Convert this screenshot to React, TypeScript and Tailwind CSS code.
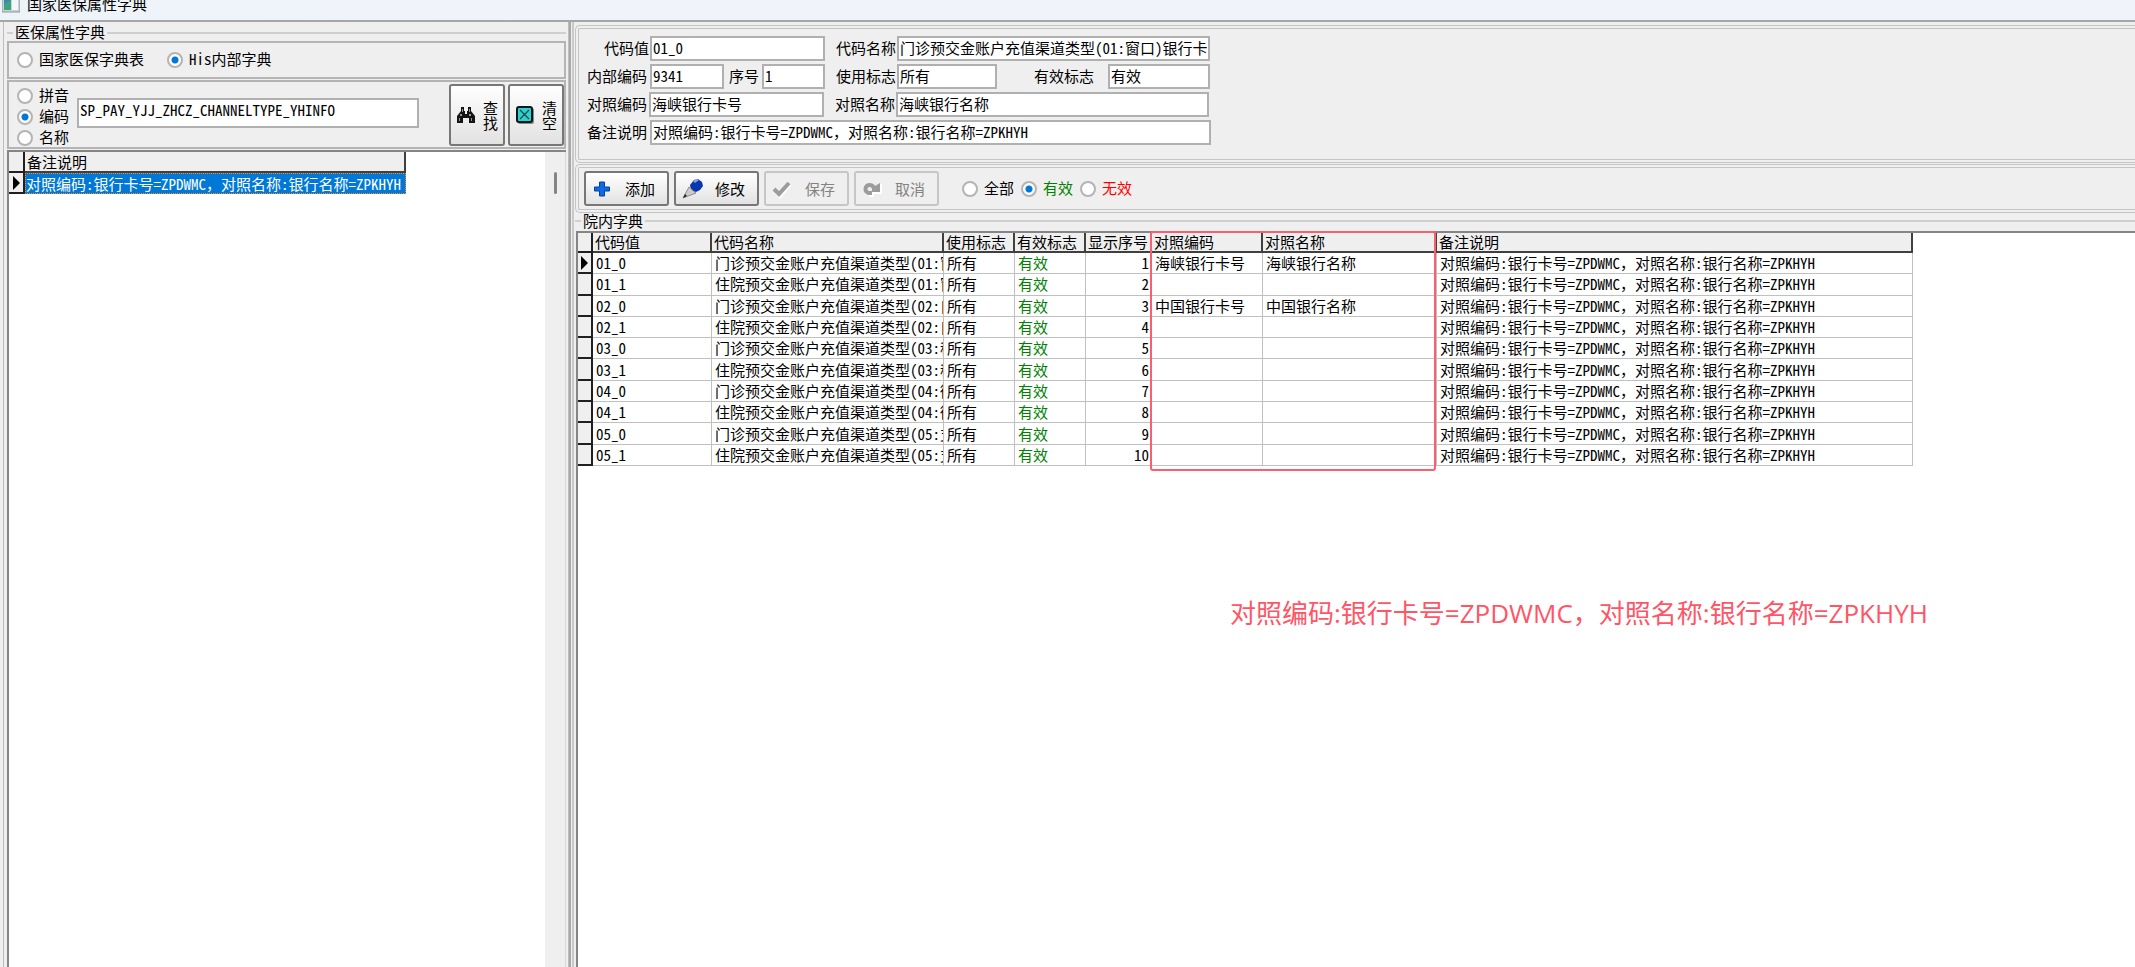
import { useState } from "react";
import type { InputHTMLAttributes, ReactNode } from "react";
import clsx from "clsx";

interface DictRow {
  code: string;
  name: string;
  order: number;
  mapCode?: string;
  mapName?: string;
}

const REMARK = "对照编码:银行卡号=ZPDWMC，对照名称:银行名称=ZPKHYH";

const ROWS: DictRow[] = [
  { code: "01_0", name: "门诊预交金账户充值渠道类型(01:窗口)", order: 1, mapCode: "海峡银行卡号", mapName: "海峡银行名称" },
  { code: "01_1", name: "住院预交金账户充值渠道类型(01:窗口)", order: 2 },
  { code: "02_0", name: "门诊预交金账户充值渠道类型(02:自助)", order: 3, mapCode: "中国银行卡号", mapName: "中国银行名称" },
  { code: "02_1", name: "住院预交金账户充值渠道类型(02:自助)", order: 4 },
  { code: "03_0", name: "门诊预交金账户充值渠道类型(03:移动)", order: 5 },
  { code: "03_1", name: "住院预交金账户充值渠道类型(03:移动)", order: 6 },
  { code: "04_0", name: "门诊预交金账户充值渠道类型(04:微信)", order: 7 },
  { code: "04_1", name: "住院预交金账户充值渠道类型(04:微信)", order: 8 },
  { code: "05_0", name: "门诊预交金账户充值渠道类型(05:支付宝)", order: 9 },
  { code: "05_1", name: "住院预交金账户充值渠道类型(05:支付宝)", order: 10 },
];

const TH =
  "whitespace-nowrap border-b-2 border-r-2 border-[#404040] bg-[#efefef] p-0 pl-[2px] text-left font-normal leading-[18px]";
const TD = "whitespace-nowrap border-b border-r border-[#c0c0c0] p-0 pl-[3px] leading-[18px]";
const MARK = "border-b-2 border-r-2 border-[#202020] bg-[#efefef] p-0";

export default function App() {
  return (
    <div className="flex h-screen flex-col overflow-hidden bg-[#efefef] font-['Noto_Sans_Mono_CJK_SC','Noto_Sans_CJK_SC',monospace] text-[15px] leading-[18px] text-black">
      <TitleBar />
      <div className="flex min-h-0 flex-1 border-t-2 border-[#a6a6a6]">
        <LeftPane />
        <RightPane />
      </div>
    </div>
  );
}

function TitleBar() {
  return (
    <header className="flex h-5 shrink-0 items-end gap-[7px] bg-gradient-to-r from-[#edf4f8] to-[#f1f3fb] to-30% pl-[2px]">
      <svg width="18" height="20" viewBox="0 0 18 20" className="shrink-0">
        <rect x="0" y="-6" width="18" height="18" fill="#c9d2d6" stroke="#8b979d" />
        <rect x="2" y="-2" width="7" height="12" fill="#3f86b4" />
        <path d="M2 4 9 0v10H2z" fill="#3fa37c" />
        <rect x="10" y="-2" width="6" height="12" fill="#f4f7f7" />
      </svg>
      <h1 className="h-5 font-['Noto_Sans_CJK_SC',sans-serif] leading-[8px]">国家医保属性字典</h1>
    </header>
  );
}

function Radio({
  name,
  label,
  checked,
  onSelect,
  className,
}: {
  name: string;
  label: string;
  checked: boolean;
  onSelect: () => void;
  className?: string;
}) {
  return (
    <label className="flex h-[18px] items-center gap-[6px] whitespace-nowrap">
      <input
        type="radio"
        name={name}
        checked={checked}
        onChange={onSelect}
        className="size-4 shrink-0 appearance-none rounded-full border-2 border-[#b4b4b4] bg-white checked:bg-[radial-gradient(circle,#0078d7_3px,#fff_4px)]"
      />
      <span className={clsx("pb-[2px] leading-[18px]", className)}>{label}</span>
    </label>
  );
}

function LeftPane() {
  const [source, setSource] = useState("His内部字典");
  const [mode, setMode] = useState("编码");

  return (
    <aside className="flex w-[571px] shrink-0 flex-col border-r-2 border-[#a8a8a8] pl-[3px]">
      <fieldset className="flex min-h-0 min-w-0 flex-1 flex-col border-l border-r border-[#bdbdbd] pl-[3px] pr-[2px]">
        <div className="flex h-[19px] shrink-0 items-center gap-[2px]">
          <span className="mt-[2px] w-[6px] border-t-2 border-[#cfcfcf]" />
          <h2 className="leading-[18px]">医保属性字典</h2>
          <span className="mt-[2px] flex-1 border-t-2 border-[#cfcfcf]" />
        </div>

        <div className="flex h-[38px] shrink-0 items-center gap-[23px] border-2 border-[#b4b4b4] pl-2">
          {["国家医保字典表", "His内部字典"].map((s) => (
            <Radio key={s} name="source" label={s} checked={source === s} onSelect={() => setSource(s)} />
          ))}
        </div>

        <div className="mt-px flex h-[69px] shrink-0 items-center border-2 border-[#b4b4b4] pl-2">
          <div className="flex flex-col gap-[3px] pt-[4px]">
            {["拼音", "编码", "名称"].map((m) => (
              <Radio key={m} name="mode" label={m} checked={mode === m} onSelect={() => setMode(m)} />
            ))}
          </div>
          <input
            aria-label="检索内容"
            defaultValue="SP_PAY_YJJ_ZHCZ_CHANNELTYPE_YHINFO"
            className="mb-1 ml-2 h-[30px] w-[342px] border-2 border-[#b0b0b0] bg-white px-px pb-[7px] outline-none"
          />
          <div className="ml-auto flex gap-[3px]">
            <SideButton icon={<BinocularsIcon />}>查找</SideButton>
            <SideButton icon={<ClearIcon />}>清空</SideButton>
          </div>
        </div>

        <div className="mt-px flex min-h-0 flex-1 border-l-2 border-t-2 border-[#858585]">
          <div className="flex-1 bg-white">
            <table className="w-[397px] table-fixed border-separate border-spacing-0">
              <colgroup>
                <col className="w-4" />
                <col />
              </colgroup>
              <thead>
                <tr className="h-[21px]">
                  <th className={MARK} />
                  <th className={TH}>备注说明</th>
                </tr>
              </thead>
              <tbody>
                <tr className="h-[21px]">
                  <td className={MARK}>
                    <RowPointer />
                  </td>
                  <td className="whitespace-nowrap border border-dotted border-[#ff8728] bg-[#0078d7] p-0 leading-[18px] text-white">
                    {REMARK}
                  </td>
                </tr>
              </tbody>
            </table>
          </div>
          <div className="flex w-[21px] justify-center border-r border-[#d8d8d8] pt-5">
            <span className="h-[22px] w-[3px] rounded-full bg-[#858585]" />
          </div>
        </div>
      </fieldset>
    </aside>
  );
}

function SideButton({ icon, children }: { icon: ReactNode; children: ReactNode }) {
  return (
    <button
      type="button"
      className="flex h-[62px] w-14 items-center justify-between rounded-[3px] border-2 border-[#777] bg-gradient-to-b from-white to-[#e2e2e2] px-[5px]"
    >
      {icon}
      <span className="w-[15px] break-all leading-[15px]">{children}</span>
    </button>
  );
}

function RightPane() {
  return (
    <main className="ml-px flex min-w-0 flex-1 flex-col border-l-2 border-[#c9c9c9] pl-px">
      <DetailForm />
      <Toolbar />
      <div className="mb-[3px] flex h-[15px] shrink-0 items-center gap-[2px]">
        <span className="w-[6px] border-t-2 border-[#cfcfcf]" />
        <h2 className="leading-[18px]">院内字典</h2>
        <span className="flex-1 border-t-2 border-[#cfcfcf]" />
      </div>
      <DictGrid />
    </main>
  );
}

function Field({
  label,
  labelClass,
  className,
  ...rest
}: { label: string; labelClass: string } & InputHTMLAttributes<HTMLInputElement>) {
  return (
    <label className="flex shrink-0 items-center">
      <span className={clsx("shrink-0 whitespace-nowrap pb-[2px] leading-[18px]", labelClass)}>{label}</span>
      <input
        {...rest}
        className={clsx("h-[25px] border-2 border-[#b0b0b0] bg-white px-px pb-[3px] outline-none", className)}
      />
    </label>
  );
}

function DetailForm() {
  return (
    <form className="mt-[3px] flex h-[138px] shrink-0 flex-col gap-[3px] rounded-l-[5px] border-4 border-r-0 border-double border-[#c4c4c4] pl-2 pt-[7px]">
      <div className="flex gap-[11px]">
        <Field label="代码值" labelClass="w-[63px] pr-px text-right" className="w-[175px]" defaultValue="01_0" />
        <Field
          label="代码名称"
          labelClass="w-[61px]"
          className="w-[313px]"
          defaultValue="门诊预交金账户充值渠道类型(01:窗口)银行卡号"
        />
      </div>
      <div className="flex gap-[5px]">
        <Field label="内部编码" labelClass="w-[63px]" className="w-[74px]" defaultValue="9341" />
        <Field label="序号" labelClass="w-[33px]" className="w-[63px]" defaultValue="1" />
        <div className="flex gap-[37px] pl-[6px]">
          <Field label="使用标志" labelClass="w-[61px]" className="w-[100px]" defaultValue="所有" />
          <Field label="有效标志" labelClass="w-[74px]" className="w-[102px]" defaultValue="有效" />
        </div>
      </div>
      <div className="flex gap-[11px]">
        <Field label="对照编码" labelClass="w-[62px]" className="w-[175px]" defaultValue="海峡银行卡号" />
        <Field label="对照名称" labelClass="w-[61px]" className="w-[313px]" defaultValue="海峡银行名称" />
      </div>
      <Field label="备注说明" labelClass="w-[63px]" className="w-[561px]" defaultValue={REMARK} />
    </form>
  );
}

function Toolbar() {
  const [filter, setFilter] = useState("有效");
  const filters = [
    { label: "全部", color: "text-black" },
    { label: "有效", color: "text-[#008000]" },
    { label: "无效", color: "text-[#ff0000]" },
  ];

  return (
    <div className="mt-px flex h-[49px] shrink-0 items-center gap-[5px] rounded-l-[5px] border-4 border-r-0 border-double border-[#c4c4c4] pl-[5px]">
      <ToolButton icon={<PlusIcon />}>添加</ToolButton>
      <ToolButton icon={<PenIcon />}>修改</ToolButton>
      <ToolButton icon={<TickIcon />} disabled>
        保存
      </ToolButton>
      <ToolButton icon={<UndoIcon />} disabled>
        取消
      </ToolButton>
      <div className="ml-[18px] flex gap-[7px] pt-px">
        {filters.map((f) => (
          <Radio
            key={f.label}
            name="filter"
            label={f.label}
            checked={filter === f.label}
            onSelect={() => setFilter(f.label)}
            className={f.color}
          />
        ))}
      </div>
    </div>
  );
}

function ToolButton({ icon, disabled, children }: { icon: ReactNode; disabled?: boolean; children: ReactNode }) {
  return (
    <button
      type="button"
      disabled={disabled}
      className={clsx(
        "flex h-[35px] w-[85px] items-center justify-between rounded-[3px] border-2 pl-[6px] pr-3",
        disabled
          ? "border-[#c6c6c6] bg-[#efefef] text-[#838383]"
          : "border-[#777] bg-gradient-to-b from-white to-[#e2e2e2]",
      )}
    >
      {icon}
      <span>{children}</span>
    </button>
  );
}

function DictGrid() {
  return (
    <div className="ml-px min-h-0 flex-1 border-l-2 border-t-2 border-[#858585] bg-white">
      <div className="relative w-[1335px]">
        <table className="h-[233px] w-full table-fixed border-separate border-spacing-0">
          <colgroup>
            <col className="w-[15px]" />
            <col className="w-[119px]" />
            <col className="w-[232px]" />
            <col className="w-[71px]" />
            <col className="w-[71px]" />
            <col className="w-[66px]" />
            <col className="w-[111px]" />
            <col className="w-[174px]" />
            <col />
          </colgroup>
          <thead>
            <tr>
              <th className={MARK} />
              {["代码值", "代码名称", "使用标志", "有效标志", "显示序号", "对照编码", "对照名称", "备注说明"].map((h) => (
                <th key={h} className={TH}>
                  {h}
                </th>
              ))}
            </tr>
          </thead>
          <tbody>
            {ROWS.map((r, i) => (
              <tr key={r.code}>
                <td className={MARK}>{i === 0 && <RowPointer />}</td>
                <td className={TD}>{r.code}</td>
                <td className={clsx(TD, "overflow-hidden")}>{r.name}</td>
                <td className={TD}>所有</td>
                <td className={clsx(TD, "text-[#008000]")}>有效</td>
                <td className={clsx(TD, "pr-[2px] text-right")}>{r.order}</td>
                <td className={TD}>{r.mapCode}</td>
                <td className={TD}>{r.mapName}</td>
                <td className={TD}>{REMARK}</td>
              </tr>
            ))}
          </tbody>
        </table>
        {/* 对照列标注框 */}
        <div className="pointer-events-none absolute -top-[2px] left-[572px] h-[240px] w-[286px] rounded-[3px] border-2 border-[#fa5f70]" />
        <p className="absolute left-[652px] top-[362px] whitespace-nowrap font-['Open_Sans','Noto_Sans_CJK_SC',sans-serif] text-[26px] leading-9 text-[#ff5566]">
          {REMARK}
        </p>
      </div>
    </div>
  );
}

function RowPointer() {
  return (
    <svg width="9" height="14" viewBox="0 0 9 14" className="mx-auto block">
      <path d="M1 0 8 7 1 14z" fill="#000" />
    </svg>
  );
}

function BinocularsIcon() {
  return (
    <svg width="20" height="18" viewBox="0 0 20 18">
      <path d="M5 1h3v4h1v3h2V5h1V1h3v4l4 5v7h-6v-5H7v5H1v-7l4-5z" fill="#151515" />
      <path d="M6 3h1v3H6zM13 3h1v3h-1zM4 8h2v2H4zM13 8h2v2h-2zM3 12h1v3H3zM15 12h1v3h-1z" fill="#9a9a9a" />
    </svg>
  );
}

function ClearIcon() {
  return (
    <svg width="20" height="20" viewBox="0 0 20 20">
      <rect x="3" y="3" width="16" height="16" rx="2" fill="#8a8a8a" />
      <rect x="2" y="2" width="15" height="15" rx="2" fill="#2fd0cf" stroke="#0a1a1a" strokeWidth="2" />
      <path d="m5 5 9 9M14 5l-9 9" stroke="#0b4a4a" strokeWidth="1.2" />
    </svg>
  );
}

function PlusIcon() {
  return (
    <svg width="20" height="20" viewBox="0 0 20 20">
      <path d="M7.500 3h5v5h5v4h-5v5h-5v-5h-5V8h5z" fill="#0c6be0" stroke="#0a3fa0" />
    </svg>
  );
}

function PenIcon() {
  return (
    <svg width="22" height="22" viewBox="0 0 22 22">
      <path d="M1 20 7 9l7 6z" fill="#cfcbc4" stroke="#8d8d8d" />
      <path d="m1 20 2-4 2 2z" fill="#222" />
      <path d="m8 7 4-5 4-1 4 3 1 4-3 4-4 2c-3-1-6-4-6-7z" fill="#0a37b0" />
      <path d="m11 3 4-2 2 1-4 3z" fill="#8fa6dc" />
    </svg>
  );
}

function TickIcon() {
  return (
    <svg width="20" height="20" viewBox="0 0 20 20">
      <path d="m3 11 5 6L18 5" fill="none" stroke="#fff" strokeWidth="4" />
      <path d="m2 10 5 5L17 4" fill="none" stroke="#9c9c9c" strokeWidth="4" />
    </svg>
  );
}

function UndoIcon() {
  return (
    <svg width="20" height="20" viewBox="0 0 20 20">
      <path d="M7 17h4v-3h8V5" fill="none" stroke="#fff" strokeWidth="2" />
      <path d="M10 14H7a4 4 0 1 1 1-8c2 0 3 1 4 3" fill="none" stroke="#9c9c9c" strokeWidth="4" />
      <path d="M10 7h3l5-3v9h-8z" fill="#9c9c9c" />
    </svg>
  );
}
